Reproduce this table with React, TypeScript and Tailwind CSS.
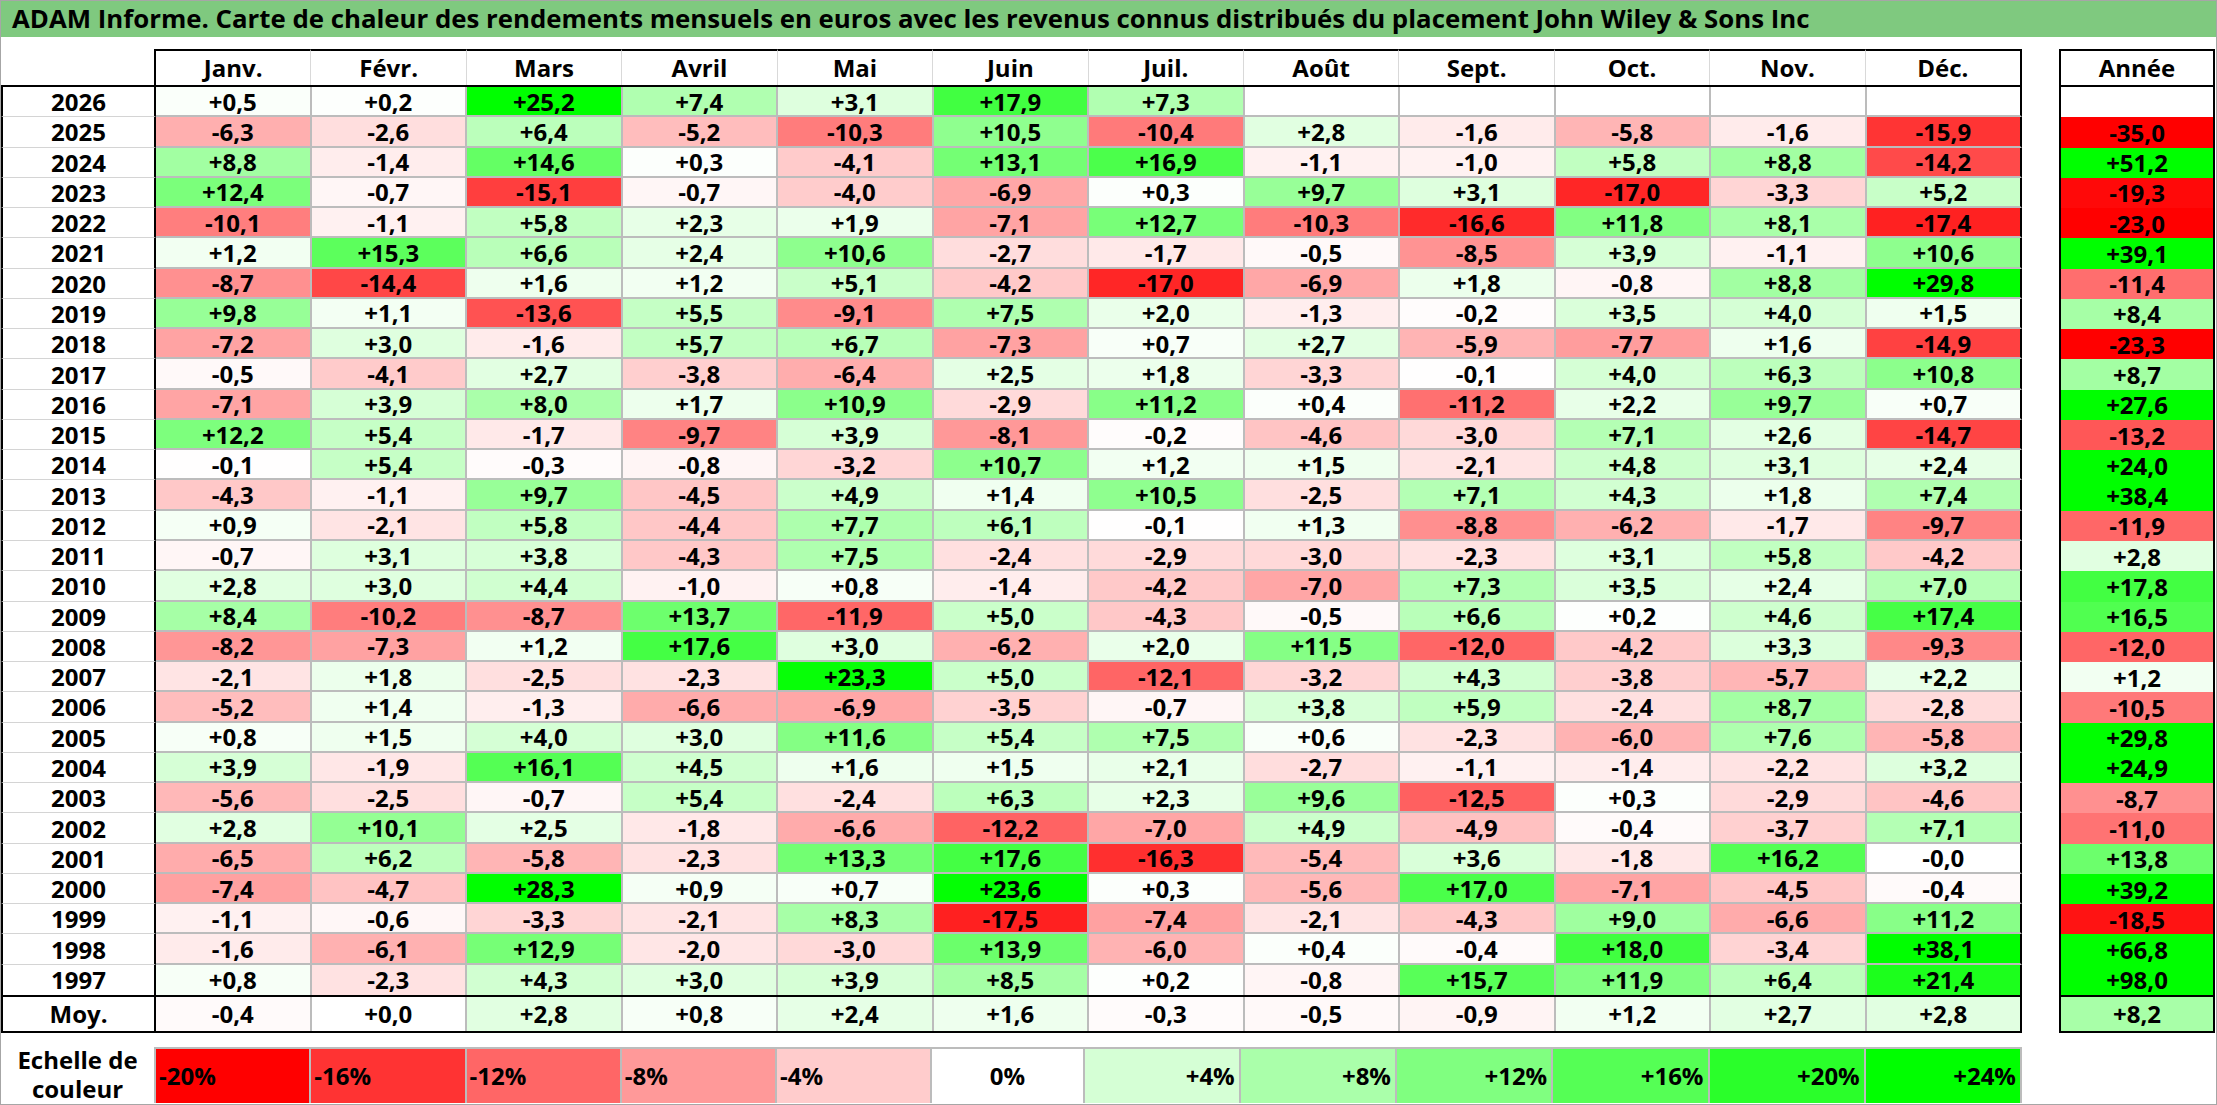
import React from "react";

const months = ["Janv.", "Févr.", "Mars", "Avril", "Mai", "Juin", "Juil.", "Août", "Sept.", "Oct.", "Nov.", "Déc."];

const raw = `2026|+0,5 +0,2 +25,2 +7,4 +3,1 +17,9 +7,3 _ _ _ _ _|_
2025|-6,3 -2,6 +6,4 -5,2 -10,3 +10,5 -10,4 +2,8 -1,6 -5,8 -1,6 -15,9|-35,0
2024|+8,8 -1,4 +14,6 +0,3 -4,1 +13,1 +16,9 -1,1 -1,0 +5,8 +8,8 -14,2|+51,2
2023|+12,4 -0,7 -15,1 -0,7 -4,0 -6,9 +0,3 +9,7 +3,1 -17,0 -3,3 +5,2|-19,3
2022|-10,1 -1,1 +5,8 +2,3 +1,9 -7,1 +12,7 -10,3 -16,6 +11,8 +8,1 -17,4|-23,0
2021|+1,2 +15,3 +6,6 +2,4 +10,6 -2,7 -1,7 -0,5 -8,5 +3,9 -1,1 +10,6|+39,1
2020|-8,7 -14,4 +1,6 +1,2 +5,1 -4,2 -17,0 -6,9 +1,8 -0,8 +8,8 +29,8|-11,4
2019|+9,8 +1,1 -13,6 +5,5 -9,1 +7,5 +2,0 -1,3 -0,2 +3,5 +4,0 +1,5|+8,4
2018|-7,2 +3,0 -1,6 +5,7 +6,7 -7,3 +0,7 +2,7 -5,9 -7,7 +1,6 -14,9|-23,3
2017|-0,5 -4,1 +2,7 -3,8 -6,4 +2,5 +1,8 -3,3 -0,1 +4,0 +6,3 +10,8|+8,7
2016|-7,1 +3,9 +8,0 +1,7 +10,9 -2,9 +11,2 +0,4 -11,2 +2,2 +9,7 +0,7|+27,6
2015|+12,2 +5,4 -1,7 -9,7 +3,9 -8,1 -0,2 -4,6 -3,0 +7,1 +2,6 -14,7|-13,2
2014|-0,1 +5,4 -0,3 -0,8 -3,2 +10,7 +1,2 +1,5 -2,1 +4,8 +3,1 +2,4|+24,0
2013|-4,3 -1,1 +9,7 -4,5 +4,9 +1,4 +10,5 -2,5 +7,1 +4,3 +1,8 +7,4|+38,4
2012|+0,9 -2,1 +5,8 -4,4 +7,7 +6,1 -0,1 +1,3 -8,8 -6,2 -1,7 -9,7|-11,9
2011|-0,7 +3,1 +3,8 -4,3 +7,5 -2,4 -2,9 -3,0 -2,3 +3,1 +5,8 -4,2|+2,8
2010|+2,8 +3,0 +4,4 -1,0 +0,8 -1,4 -4,2 -7,0 +7,3 +3,5 +2,4 +7,0|+17,8
2009|+8,4 -10,2 -8,7 +13,7 -11,9 +5,0 -4,3 -0,5 +6,6 +0,2 +4,6 +17,4|+16,5
2008|-8,2 -7,3 +1,2 +17,6 +3,0 -6,2 +2,0 +11,5 -12,0 -4,2 +3,3 -9,3|-12,0
2007|-2,1 +1,8 -2,5 -2,3 +23,3 +5,0 -12,1 -3,2 +4,3 -3,8 -5,7 +2,2|+1,2
2006|-5,2 +1,4 -1,3 -6,6 -6,9 -3,5 -0,7 +3,8 +5,9 -2,4 +8,7 -2,8|-10,5
2005|+0,8 +1,5 +4,0 +3,0 +11,6 +5,4 +7,5 +0,6 -2,3 -6,0 +7,6 -5,8|+29,8
2004|+3,9 -1,9 +16,1 +4,5 +1,6 +1,5 +2,1 -2,7 -1,1 -1,4 -2,2 +3,2|+24,9
2003|-5,6 -2,5 -0,7 +5,4 -2,4 +6,3 +2,3 +9,6 -12,5 +0,3 -2,9 -4,6|-8,7
2002|+2,8 +10,1 +2,5 -1,8 -6,6 -12,2 -7,0 +4,9 -4,9 -0,4 -3,7 +7,1|-11,0
2001|-6,5 +6,2 -5,8 -2,3 +13,3 +17,6 -16,3 -5,4 +3,6 -1,8 +16,2 -0,0|+13,8
2000|-7,4 -4,7 +28,3 +0,9 +0,7 +23,6 +0,3 -5,6 +17,0 -7,1 -4,5 -0,4|+39,2
1999|-1,1 -0,6 -3,3 -2,1 +8,3 -17,5 -7,4 -2,1 -4,3 +9,0 -6,6 +11,2|-18,5
1998|-1,6 -6,1 +12,9 -2,0 -3,0 +13,9 -6,0 +0,4 -0,4 +18,0 -3,4 +38,1|+66,8
1997|+0,8 -2,3 +4,3 +3,0 +3,9 +8,5 +0,2 -0,8 +15,7 +11,9 +6,4 +21,4|+98,0`;

type Row = { year: string; vals: (string | null)[]; total: string | null };

const rows: Row[] = raw.split("\n").map((line) => {
  const [year, vals, total] = line.split("|");
  return {
    year,
    vals: vals.trim().split(/\s+/).map((v) => (v === "_" ? null : v)),
    total: total.trim() === "_" ? null : total.trim(),
  };
});

const moy = "-0,4 +0,0 +2,8 +0,8 +2,4 +1,6 -0,3 -0,5 -0,9 +1,2 +2,7 +2,8".split(" ");
const moyTotal = "+8,2";

function bg(v: string | null): string {
  if (!v) return "#ffffff";
  const n = parseFloat(v.replace(",", "."));
  if (n < 0) {
    const t = Math.min(1, -n / 20);
    const c = Math.round(255 * (1 - t));
    return `rgb(255,${c},${c})`;
  }
  const t = Math.min(1, n / 24);
  const c = Math.round(255 * (1 - t));
  return `rgb(${c},255,${c})`;
}

const scale = [
  { label: "-20%", v: "-20", align: "left" },
  { label: "-16%", v: "-16", align: "left" },
  { label: "-12%", v: "-12", align: "left" },
  { label: "-8%", v: "-8", align: "left" },
  { label: "-4%", v: "-4", align: "left" },
  { label: "0%", v: "0", align: "center" },
  { label: "+4%", v: "+4", align: "right" },
  { label: "+8%", v: "+8", align: "right" },
  { label: "+12%", v: "+12", align: "right" },
  { label: "+16%", v: "+16", align: "right" },
  { label: "+20%", v: "+20", align: "right" },
  { label: "+24%", v: "+24", align: "right" },
];

function DataCell({ v, last, isDec }: { v: string | null; last: boolean; isDec: boolean }) {
  const cls = isDec
    ? last
      ? "flex-1 basis-0 flex items-center justify-center pt-[1px] border-r-2 border-r-black"
      : "flex-1 basis-0 flex items-center justify-center pt-[1px] border-r-2 border-r-black border-b-2 border-b-[#bcbcbc]"
    : last
    ? "flex-1 basis-0 flex items-center justify-center pt-[1px] border-r-2 border-r-[#bcbcbc]"
    : "flex-1 basis-0 flex items-center justify-center pt-[1px] border-r-2 border-r-[#bcbcbc] border-b-2 border-b-[#bcbcbc]";
  return (
    <div className={cls} style={{ backgroundColor: bg(v) }}>
      {v ?? ""}
    </div>
  );
}

export default function App() {
  return (
    <div className="w-[2217px] h-[1105px] border border-[#a6a6a6] bg-white font-['Open_Sans',sans-serif] font-bold text-black overflow-hidden text-[24px] leading-none">
      <div className="h-[36px] bg-[#7fc97f] flex items-center pl-[11px] text-[25.8px] whitespace-nowrap">
        ADAM Informe. Carte de chaleur des rendements mensuels en euros avec les revenus connus distribués du placement John Wiley &amp; Sons Inc
      </div>

      <div className="flex mt-[12px]">
        {/* main table */}
        <div className="w-[2021px] flex flex-col">
          <div className="flex h-[38px] border-b-2 border-black">
            <div className="w-[155px] border-r-2 border-black" />
            <div className="flex-1 flex">
              {months.map((m, i) => (
                <div
                  key={m}
                  className={
                    i === 11
                      ? "flex-1 basis-0 flex items-center justify-center border-t-2 border-t-black border-r-2 border-r-black"
                      : "flex-1 basis-0 flex items-center justify-center border-t-2 border-t-black border-r border-r-[#d9d9d9]"
                  }
                >
                  {m}
                </div>
              ))}
            </div>
          </div>

          {rows.map((r, ri) => {
            const last = ri === rows.length - 1;
            return (
              <div key={r.year} className="flex h-[30.27px]">
                <div
                  className={
                    last
                      ? "w-[155px] flex items-center justify-center pt-[1px] border-x-2 border-x-black"
                      : "w-[155px] flex items-center justify-center pt-[1px] border-x-2 border-x-black border-b border-b-[#d4d4d4]"
                  }
                >
                  {r.year}
                </div>
                <div className="flex-1 flex">
                  {r.vals.map((v, i) => (
                    <DataCell key={i} v={v} last={last} isDec={i === 11} />
                  ))}
                </div>
              </div>
            );
          })}

          <div className="flex h-[38px] border-y-2 border-black">
            <div className="w-[155px] flex items-center justify-center border-x-2 border-x-black">Moy.</div>
            <div className="flex-1 flex">
              {moy.map((v, i) => (
                <DataCell key={i} v={v} last={true} isDec={i === 11} />
              ))}
            </div>
          </div>
        </div>

        {/* Année column */}
        <div className="w-[156px] ml-[37px] flex flex-col">
          <div className="h-[38px] border-2 border-black flex items-center justify-center">Année</div>
          {rows.map((r) => (
            <div
              key={r.year}
              className="h-[30.27px] border-x-2 border-x-black flex items-center justify-center pt-[1px]"
              style={{ backgroundColor: bg(r.total) }}
            >
              {r.total ?? ""}
            </div>
          ))}
          <div
            className="h-[38px] border-2 border-black flex items-center justify-center"
            style={{ backgroundColor: bg(moyTotal) }}
          >
            {moyTotal}
          </div>
        </div>
      </div>

      {/* colour scale */}
      <div className="flex mt-[14px] h-[56px]">
        <div className="w-[155px] flex flex-col items-center justify-center gap-[5px] border-r-2 border-r-[#bcbcbc]">
          <span className="block leading-none">Echelle de</span>
          <span className="block leading-none">couleur</span>
        </div>
        <div className="w-[1866px] flex border-t-2 border-t-[#bcbcbc]">
          {scale.map((s) => (
            <div
              key={s.label}
              className={
                s.align === "left"
                  ? "flex-1 basis-0 flex items-center justify-start pl-[3px] border-r-2 border-r-[#bcbcbc]"
                  : s.align === "center"
                  ? "flex-1 basis-0 flex items-center justify-center border-r-2 border-r-[#bcbcbc]"
                  : "flex-1 basis-0 flex items-center justify-end pr-[4px] border-r-2 border-r-[#bcbcbc]"
              }
              style={{ backgroundColor: bg(s.v) }}
            >
              {s.label}
            </div>
          ))}
        </div>
      </div>
    </div>
  );
}
